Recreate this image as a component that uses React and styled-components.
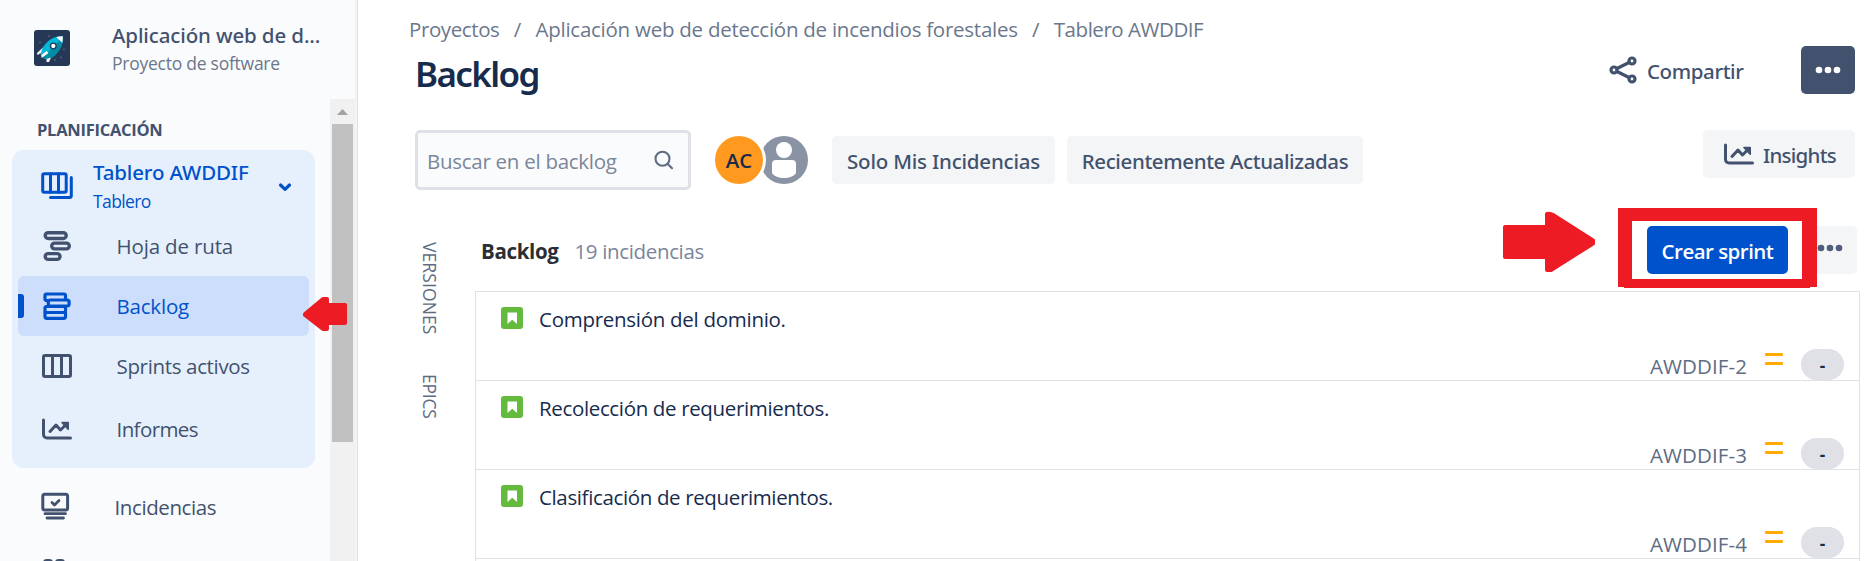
import React from "react";
import styled, { createGlobalStyle, css } from "styled-components";

const GlobalStyle = createGlobalStyle`
  * { box-sizing: border-box; }
  html, body { margin: 0; padding: 0; background: #fff; overflow: hidden; }
  body { font-family: "Open Sans", "Noto Sans", sans-serif; font-size: 20.5px; color: #172b4d; }
`;

const medium = css`
  font-family: "Noto Sans", "Open Sans", sans-serif;
  font-weight: 500;
`;

const Page = styled.div`
  position: relative;
  display: flex;
  width: 1870px;
  height: 561px;
  overflow: hidden;
`;

/* ---------- Sidebar ---------- */

const Sidebar = styled.aside`
  display: flex;
  flex-direction: column;
  flex: none;
  width: 358px;
  background: #fafbfc;
  border-right: 1px solid #dfe1e6;
  box-shadow: inset -2px 0 0 #f3f4f6;
`;

const ProjectHeader = styled.header`
  display: flex;
  flex: none;
  gap: 42px;
  height: 99px;
  padding: 21px 0 0 34px;
`;

const ProjectLogo = styled.svg`
  flex: none;
  width: 36px;
  height: 36px;
  margin-top: 9px;
`;

const ProjectName = styled.div`
  ${medium}
  line-height: 28px;
  letter-spacing: -0.12px;
  color: #42526e;
  white-space: nowrap;
`;

const ProjectType = styled.div`
  margin-top: 2px;
  font-size: 17.5px;
  line-height: 24px;
  letter-spacing: -0.25px;
  color: #6b778c;
`;

const SidebarScroll = styled.div`
  display: flex;
  height: 462px;
`;

const Nav = styled.nav`
  width: 330px;
  flex: none;
  padding-top: 19px;
  overflow: hidden;
`;

const NavHeading = styled.h2`
  margin: 0 0 8px 37px;
  font-size: 16.5px;
  font-weight: 700;
  line-height: 24px;
  letter-spacing: -0.26px;
  color: #42526e;
`;

const NavPanel = styled.section`
  width: 303px;
  height: 318px;
  margin: 0 0 9px 12px;
  padding: 0 6px;
  border-radius: 12px;
  background: #e6f0fc;
`;

const BoardHeader = styled.div`
  display: flex;
  align-items: flex-start;
  height: 66px;
  padding: 8px 16px 0 21px;
  color: #0052cc;
`;

const BoardIcon = styled.svg`
  flex: none;
  width: 36px;
  height: 36px;
  margin-top: 10px;
`;

const BoardText = styled.div`
  flex: 1;
  margin-left: 18px;
`;

const BoardName = styled.div`
  ${medium}
  line-height: 28px;
  letter-spacing: -0.15px;
`;

const BoardType = styled.div`
  margin-top: 3px;
  font-size: 17.5px;
  line-height: 24px;
  letter-spacing: -0.6px;
`;

const Chevron = styled.svg`
  flex: none;
  width: 16px;
  height: 12px;
  margin-top: 23px;
`;

const NavItem = styled.a`
  position: relative;
  display: flex;
  align-items: center;
  gap: 41.5px;
  height: 60px;
  margin-top: ${(p) => p.$offset || 0}px;
  padding-left: ${(p) => (p.$root ? 37 : 21)}px;
  border-radius: 6px;
  color: ${(p) => (p.$selected ? "#0052cc" : "#42526e")};
  background: ${(p) => (p.$selected ? "#ccdefb" : "transparent")};
  ${(p) =>
    p.$selected &&
    css`
      &::before {
        content: "";
        position: absolute;
        left: 0;
        top: 18px;
        width: 6px;
        height: 24px;
        border-radius: 0 3px 3px 0;
        background: #0052cc;
      }
    `}
`;

const NavIcon = styled.svg`
  flex: none;
  width: 36px;
  height: 36px;
`;

const NavLabel = styled.span`
  line-height: 28px;
  letter-spacing: ${(p) => p.$tracking}px;
`;

const Scrollbar = styled.div`
  display: flex;
  flex-direction: column;
  align-items: center;
  width: 25px;
  background: #f1f1f1;
`;

const ScrollUp = styled.svg`
  width: 25px;
  height: 25px;
`;

const ScrollThumb = styled.div`
  width: 21px;
  height: 318px;
  background: #c1c1c1;
`;

/* ---------- Main ---------- */

const Main = styled.main`
  flex: 1;
  padding: 15px 10px 0 57px;
`;

const Breadcrumbs = styled.div`
  display: flex;
  height: 28px;
  margin-left: -6px;
  line-height: 28px;
  color: #6b778c;
`;

const Crumb = styled.span`
  white-space: nowrap;
  letter-spacing: ${(p) => p.$tracking}px;
`;

const CrumbSlash = styled.span`
  width: 36px;
  text-align: center;
`;

const TitleRow = styled.div`
  display: flex;
  height: 48px;
  margin-top: 3px;
  padding-right: 5px;
`;

const Title = styled.h1`
  flex: 1;
  margin: 6px 0 0;
  font-family: "Noto Sans", "Open Sans", sans-serif;
  font-weight: 600;
  font-size: 35px;
  line-height: 44px;
  letter-spacing: -1.6px;
  color: #172b4d;
`;

const Button = styled.button`
  ${medium}
  display: flex;
  align-items: center;
  justify-content: center;
  flex: none;
  width: ${(p) => p.$width}px;
  height: 48px;
  padding: 0;
  border: 0;
  border-radius: 5px;
  font-size: 20.5px;
  color: #42526e;
  background: #f4f5f7;
`;

const ShareButton = styled(Button)`
  justify-content: flex-start;
  gap: 10px;
  margin-right: 54px;
  background: none;
`;

const MoreButton = styled(Button)`
  background: #42526e;
  color: #fff;
`;

const CreateSprintButton = styled(Button)`
  font-family: "Open Sans", sans-serif;
  font-weight: 600;
  color: #fff;
  background: #0052cc;
`;

const InsightsButton = styled(Button)`
  justify-content: flex-start;
  align-self: flex-start;
  gap: 6px;
  margin-left: auto;
  padding-left: 18px;
`;

const ButtonText = styled.span`
  padding-top: 2px;
  line-height: 28px;
  white-space: nowrap;
  letter-spacing: ${(p) => p.$tracking}px;
`;

const Toolbar = styled.div`
  display: flex;
  align-items: center;
  height: 60px;
  margin-top: 36px;
  padding-right: 5px;
`;

const SearchBox = styled.div`
  display: flex;
  align-items: center;
  justify-content: space-between;
  width: 276px;
  height: 60px;
  padding: 0 14px 0 9px;
  border: 3px solid #dfe1e6;
  border-radius: 5px;
  background: #fafbfc;
  color: #7a869a;
`;

const SearchText = styled.span`
  padding-top: 2px;
  letter-spacing: -0.27px;
`;

const Avatars = styled.div`
  display: flex;
  margin: 0 24px;
`;

const InitialsAvatar = styled.div`
  position: relative;
  width: 48px;
  height: 48px;
  border-radius: 50%;
  background: #ff991f;
  box-shadow: 0 0 0 3px #fff;
  color: #172b4d;
  font-size: 20.5px;
  font-weight: 600;
  line-height: 48px;
  text-align: center;
`;

const PersonAvatar = styled.svg`
  width: 48px;
  height: 48px;
  margin-left: -3px;
`;

const Filters = styled.div`
  display: flex;
  gap: 12px;
`;

const Board = styled.div`
  display: flex;
`;

const SideTabs = styled.div`
  display: flex;
  flex-direction: column;
  flex: none;
  gap: 40px;
  width: 60px;
  padding: 52px 0 0 3px;
`;

const SideTab = styled.span`
  width: 24px;
  writing-mode: vertical-rl;
  font-size: 17.5px;
  line-height: 24px;
  letter-spacing: ${(p) => p.$tracking}px;
  color: #5e6c84;
`;

const Backlog = styled.section`
  flex: 1;
`;

const BacklogHeader = styled.div`
  display: flex;
  align-items: center;
  height: 48px;
  margin: 36px 0 17px;
  padding: 0 3px 0 6px;
`;

const BacklogTitle = styled.h3`
  margin: 0;
  padding-top: 2px;
  font-size: 20.5px;
  font-weight: 700;
  line-height: 28px;
  letter-spacing: -0.35px;
  color: #2b2f33;
`;

const BacklogCount = styled.span`
  flex: 1;
  margin-left: 16px;
  padding-top: 2px;
  line-height: 28px;
  letter-spacing: -0.35px;
  color: #7a869a;
`;

const DotsButton = styled(Button)`
  margin-left: 15px;
  padding-bottom: 5px;
  color: #505f79;
`;

const IssueList = styled.div`
  height: 280px;
  border: solid #dfe1e6;
  border-width: 0 1px;
`;

const Issue = styled.article`
  display: flex;
  flex-direction: column;
  justify-content: space-between;
  height: 89px;
  padding: 13px 15px 0 25px;
  border-top: 1px solid #dfe1e6;
`;

const IssueSummary = styled.div`
  display: flex;
  gap: 16px;
  line-height: 28px;
  letter-spacing: ${(p) => p.$tracking}px;
`;

const StoryIcon = styled.svg`
  width: 22px;
  height: 22px;
  margin-top: 2px;
`;

const IssueMeta = styled.div`
  display: flex;
  justify-content: flex-end;
  height: 31px;
`;

const IssueKey = styled.span`
  padding-top: 3px;
  line-height: 28px;
  letter-spacing: 0.1px;
  color: #5e6c84;
`;

const PriorityIcon = styled.svg`
  width: 18px;
  height: 12px;
  margin: 4px 18px 0;
`;

const Estimate = styled.span`
  width: 43px;
  height: 31px;
  border-radius: 16px;
  background: #dfe1e6;
  font-size: 17px;
  font-weight: 700;
  line-height: 33px;
  text-align: center;
`;

const EndOfRows = styled.div`
  border-top: 1px solid #dfe1e6;
`;

/* ---------- Annotations lying over the page ---------- */

const HighlightFrame = styled.div`
  position: absolute;
  left: 1618px;
  top: 208px;
  width: 199px;
  height: 79px;
  border: solid #ed1c24;
  border-width: 13px 15px 8px 14px;
  &::after {
    content: "";
    position: absolute;
    left: -8px;
    right: -8px;
    bottom: -9px;
    height: 1px;
    background: #ed1c24;
  }
`;

const Arrow = styled.svg`
  position: absolute;
  left: ${(p) => p.$left}px;
  top: ${(p) => p.$top}px;
  width: ${(p) => p.$width}px;
  height: ${(p) => p.$height}px;
  fill: #ed1c24;
  stroke: #ed1c24;
  stroke-width: 4;
  stroke-linejoin: round;
`;

const line = { fill: "none", stroke: "currentColor", strokeWidth: 3, strokeLinecap: "round", strokeLinejoin: "round" };

const RoadmapGlyph = () => (
  <g {...line} strokeWidth="3.4">
    <rect x="6.2" y="4.7" width="21" height="5.800" rx="2.900" />
    <rect x="12.700" y="15.100" width="17.600" height="5.800" rx="2.900" />
    <rect x="6.200" y="25.600" width="14.800" height="5.800" rx="2.900" />
  </g>
);

const BacklogGlyph = () => (
  <g {...line} strokeWidth="3.2">
    <path d="M9 12.500H7.500a1.500 1.500 0 0 1-1.500-1.500V7.500A1.500 1.500 0 0 1 7.500 6H25a1.500 1.500 0 0 1 1.500 1.500V11" />
    <rect x="9.300" y="12" width="20.800" height="6" rx="2" />
    <rect x="6" y="18.500" width="20.500" height="6" rx="1.500" />
    <path d="M6 24.500v4.300a1.500 1.500 0 0 0 1.500 1.500H25a1.500 1.500 0 0 0 1.500-1.500v-4.300" />
  </g>
);

const BoardGlyph = () => (
  <g {...line}>
    <rect x="4.500" y="7.500" width="27" height="21" rx="1.500" />
    <path d="M13.500 7.500v21M22.500 7.500v21" />
  </g>
);

const ChartGlyph = () => (
  <g {...line}>
    <path d="M4.500 9v14.500a3.500 3.500 0 0 0 3.500 3.500h23.500" />
    <path d="M11 20.500l6-6.500 4.500 5 6-6" />
    <path d="M23 11.500h6.200v6.800z" fill="currentColor" strokeWidth="1.600" />
  </g>
);

const IssuesGlyph = () => (
  <g {...line}>
    <rect x="3.800" y="5.300" width="24.800" height="15.700" rx="2" />
    <path d="M13 13.500l2.500 2.500 4.500-4.500" strokeWidth="2.800" />
    <path d="M6 24.700h20.500M8 29h16.500" strokeWidth="2.800" />
  </g>
);

const ComponentsGlyph = () => (
  <g {...line}>
    <rect x="7.500" y="6.500" width="7" height="8" rx="2" />
    <rect x="19.500" y="6.500" width="7" height="8" rx="2" />
  </g>
);

const Dots = () => (
  <svg width="26" height="8" viewBox="0 0 26 8" fill="currentColor">
    <circle cx="4" cy="4" r="3.300" />
    <circle cx="13" cy="4" r="3.300" />
    <circle cx="22" cy="4" r="3.300" />
  </svg>
);

const issues = [
  { key: "AWDDIF-2", summary: "Comprensión del dominio.", tracking: -0.28 },
  { key: "AWDDIF-3", summary: "Recolección de requerimientos.", tracking: -0.35 },
  { key: "AWDDIF-4", summary: "Clasificación de requerimientos.", tracking: -0.36 },
];

const boardItems = [
  { label: "Hoja de ruta", Glyph: RoadmapGlyph, tracking: -0.15 },
  { label: "Backlog", Glyph: BacklogGlyph, tracking: -0.2, selected: true },
  { label: "Sprints activos", Glyph: BoardGlyph, tracking: -0.34 },
  { label: "Informes", Glyph: ChartGlyph, tracking: -0.6, offset: 3 },
];

export default function App() {
  return (
    <Page>
      <GlobalStyle />
      <Sidebar>
        <ProjectHeader>
          <ProjectLogo viewBox="0 0 36 36">
            <rect width="36" height="36" rx="3" fill="#253858" />
            <g fill="#505f79">
              <circle cx="15" cy="6" r="1" />
              <circle cx="6" cy="12.500" r="1" />
              <circle cx="30" cy="19.500" r="1" />
              <circle cx="27" cy="27.500" r="1" />
              <circle cx="21" cy="30" r="1" />
            </g>
            <path d="M9 17.500L3 23 3.500 25 11 21zM18 25.500L15 32 12.500 32 12.500 26z" fill="#f4f5f7" />
            <path d="M28.800 6.300C20 5.800 13.500 10 8.500 18L6.500 25l4 4L18 27.500C26 21.500 29.500 14.500 28.800 6.300z" fill="#00b8d9" />
            <path d="M28.800 6.300L9 27.500l1.500 1.500L18 27.500C26 21.500 29.500 14.500 28.800 6.300z" fill="#008da6" />
            <path d="M28.800 6.300c-2.500-.1-4.600.2-6.600.9l6 5.500c.6-2 .8-4.200.6-6.400z" fill="#f4f5f7" />
            <path d="M12.500 21L7.500 25 7.500 28 14.500 23z" fill="#fff" />
            <circle cx="19.300" cy="16" r="2.800" fill="#fff" stroke="#253858" strokeWidth="1.300" />
          </ProjectLogo>
          <div>
            <ProjectName>Aplicación web de d...</ProjectName>
            <ProjectType>Proyecto de software</ProjectType>
          </div>
        </ProjectHeader>
        <SidebarScroll>
          <Nav>
            <NavHeading>PLANIFICACIÓN</NavHeading>
            <NavPanel>
              <BoardHeader>
                <BoardIcon viewBox="0 0 36 36">
                  <g {...line}>
                    <rect x="3.700" y="5.700" width="23.500" height="18.500" rx="1.500" />
                    <path d="M11.500 5.700v18.500M19.500 5.700v18.500" />
                    <path d="M32.300 9.500v18a2 2 0 0 1-2 2H11.500" />
                  </g>
                </BoardIcon>
                <BoardText>
                  <BoardName>Tablero AWDDIF</BoardName>
                  <BoardType>Tablero</BoardType>
                </BoardText>
                <Chevron viewBox="0 0 16 12">
                  <path d="M3.500 4L8 8.300 12.500 4" {...line} strokeWidth="3.200" />
                </Chevron>
              </BoardHeader>
              {boardItems.map(({ label, Glyph, tracking, selected, offset }) => (
                <NavItem key={label} $selected={selected} $offset={offset}>
                  <NavIcon viewBox="0 0 36 36">
                    <Glyph />
                  </NavIcon>
                  <NavLabel $tracking={tracking}>{label}</NavLabel>
                </NavItem>
              ))}
            </NavPanel>
            <NavItem $root>
              <NavIcon viewBox="-2 0 36 36">
                <IssuesGlyph />
              </NavIcon>
              <NavLabel $tracking={-0.4}>Incidencias</NavLabel>
            </NavItem>
            <NavItem $root $offset={5}>
              <NavIcon viewBox="0 0 36 36">
                <ComponentsGlyph />
              </NavIcon>
            </NavItem>
          </Nav>
          <Scrollbar>
            <ScrollUp viewBox="0 0 25 25">
              <path d="M7 16l5.500-6 5.500 6z" fill="#a3a3a3" />
            </ScrollUp>
            <ScrollThumb />
          </Scrollbar>
        </SidebarScroll>
      </Sidebar>

      <Main>
        <Breadcrumbs>
          <Crumb $tracking={-0.4}>Proyectos</Crumb>
          <CrumbSlash>/</CrumbSlash>
          <Crumb $tracking={-0.25}>Aplicación web de detección de incendios forestales</Crumb>
          <CrumbSlash>/</CrumbSlash>
          <Crumb $tracking={-0.46}>Tablero AWDDIF</Crumb>
        </Breadcrumbs>
        <TitleRow>
          <Title>Backlog</Title>
          <ShareButton $width={138}>
            <svg width="28" height="28" viewBox="0 0 28 28">
              <g {...line} strokeWidth="3.200">
                <circle cx="5" cy="14" r="3" />
                <circle cx="23" cy="5" r="3" />
                <circle cx="23" cy="23" r="3" />
                <path d="M8 12.500L20 6.500M8 15.500L20 21.500" />
              </g>
            </svg>
            <ButtonText $tracking={-0.4}>Compartir</ButtonText>
          </ShareButton>
          <MoreButton $width={54} aria-label="Más">
            <Dots />
          </MoreButton>
        </TitleRow>
        <Toolbar>
          <SearchBox>
            <SearchText>Buscar en el backlog</SearchText>
            <svg width="20" height="20" viewBox="0 0 20 20">
              <g fill="none" stroke="#5e6c84" strokeWidth="2.100" strokeLinecap="round">
                <circle cx="8.500" cy="8.700" r="7" />
                <path d="M13.500 13.700l4.500 4.500" />
              </g>
            </svg>
          </SearchBox>
          <Avatars>
            <InitialsAvatar>AC</InitialsAvatar>
            <PersonAvatar viewBox="0 0 48 48">
              <circle cx="24" cy="24" r="24" fill="#8993a4" />
              <circle cx="24" cy="14" r="8" fill="#fff" />
              <path d="M12 28a4 4 0 0 1 4-4h16a4 4 0 0 1 4 4v9c-2 3.500-7 5-12 5s-10-1.500-12-5z" fill="#fff" />
            </PersonAvatar>
          </Avatars>
          <Filters>
            <Button $width={223}>
              <ButtonText $tracking={-0.21}>Solo Mis Incidencias</ButtonText>
            </Button>
            <Button $width={296}>
              <ButtonText $tracking={-0.38}>Recientemente Actualizadas</ButtonText>
            </Button>
          </Filters>
          <InsightsButton $width={152}>
            <NavIcon viewBox="0 0 36 36">
              <ChartGlyph />
            </NavIcon>
            <ButtonText $tracking={-0.75}>Insights</ButtonText>
          </InsightsButton>
        </Toolbar>
        <Board>
          <SideTabs>
            <SideTab $tracking={0.1}>VERSIONES</SideTab>
            <SideTab $tracking={-0.2}>EPICS</SideTab>
          </SideTabs>
          <Backlog>
            <BacklogHeader>
              <BacklogTitle>Backlog</BacklogTitle>
              <BacklogCount>19 incidencias</BacklogCount>
              <CreateSprintButton $width={141}>
                <ButtonText $tracking={-0.53}>Crear sprint</ButtonText>
              </CreateSprintButton>
              <DotsButton $width={54} aria-label="Acciones">
                <Dots />
              </DotsButton>
            </BacklogHeader>
            <IssueList>
              {issues.map((issue) => (
                <Issue key={issue.key}>
                  <IssueSummary $tracking={issue.tracking}>
                    <StoryIcon viewBox="0 0 22 22">
                      <rect width="22" height="22" rx="3" fill="#63ba3c" />
                      <path d="M6.500 5.500h9.500V17l-4.750-4.200L6.500 17z" fill="#fff" />
                    </StoryIcon>
                    {issue.summary}
                  </IssueSummary>
                  <IssueMeta>
                    <IssueKey>{issue.key}</IssueKey>
                    <PriorityIcon viewBox="0 0 18 12">
                      <rect width="18" height="3" rx="1" fill="#ffab00" />
                      <rect y="9" width="18" height="3" rx="1" fill="#ffab00" />
                    </PriorityIcon>
                    <Estimate>-</Estimate>
                  </IssueMeta>
                </Issue>
              ))}
              <EndOfRows />
            </IssueList>
          </Backlog>
        </Board>
      </Main>

      <HighlightFrame />
      <Arrow $left={1500} $top={209} $width={98} $height={66} viewBox="0 0 98 66">
        <path d="M5 18H47V5Q50 4 53 6L93 31.500V34.500L51 61H47V48H5z" />
      </Arrow>
      <Arrow $left={300} $top={294} $width={50} $height={41} viewBox="0 0 50 41">
        <path d="M5 20L23 5H27V11H45V29H27V35H23L5 21z" />
      </Arrow>
    </Page>
  );
}
